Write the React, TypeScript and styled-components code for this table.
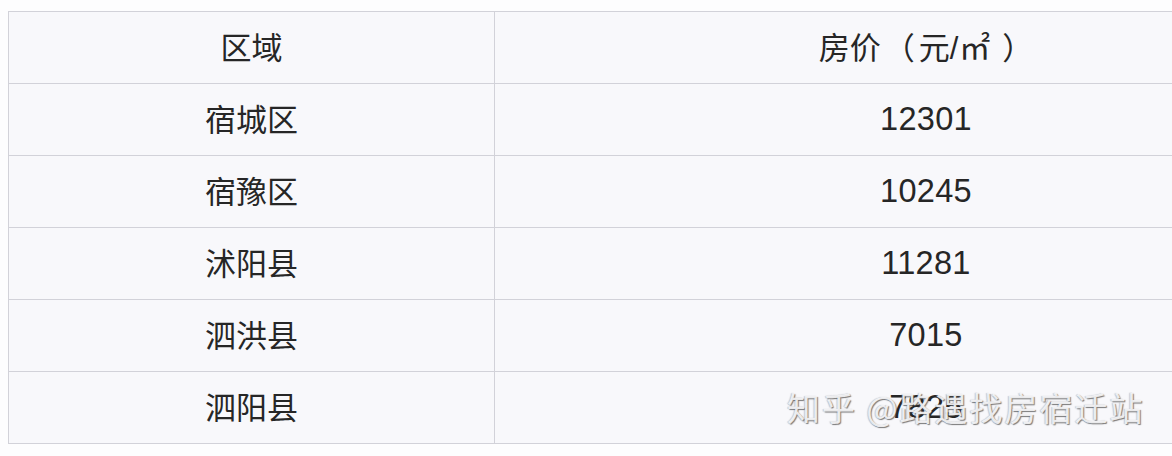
import styled, { createGlobalStyle } from "styled-components";

const GlobalStyle = createGlobalStyle`
  html, body {
    margin: 0;
    padding: 0;
    background: #fdfdfe;
    overflow: hidden;
  }
`;

const Page = styled.div`
  position: relative;
  width: 1172px;
  height: 456px;
  padding: 11px 0 0 8px;
  box-sizing: border-box;
  overflow: hidden;
`;

const Table = styled.div`
  display: grid;
  grid-template-columns: 486px 862px;
  width: 1348px;
  background: #f8f8fb;
  border-top: 1px solid #d2d2d9;
  border-left: 1px solid #d2d2d9;
  box-sizing: border-box;
`;

const Cell = styled.div<{ $first?: boolean }>`
  height: 72px;
  box-sizing: border-box;
  border-bottom: 1px solid #d2d2d9;
  border-right: ${(p) => (p.$first ? "1px solid #d2d2d9" : "none")};
  display: flex;
  align-items: center;
  justify-content: center;
  font-family: "Liberation Sans", "Noto Sans CJK SC", sans-serif;
  font-size: 31px;
  color: #262626;
  padding-bottom: 5px;
  white-space: pre;
`;

const Num = styled.span`
  font-size: 32.5px;
  letter-spacing: 0.3px;
  padding-top: 5px;
`;

const Paren = styled.span<{ $before: number; $after: number }>`
  margin-left: ${(p) => p.$before}px;
  margin-right: ${(p) => p.$after}px;
`;

const Unit = styled.span`
  font-size: 31px;
  margin-left: 1px;
`;

const Watermark = styled.div`
  position: absolute;
  left: 787px;
  top: 383px;
  font-family: "Noto Sans CJK SC", sans-serif;
  font-size: 33px;
  letter-spacing: 2px;
  color: rgba(246, 246, 248, 0.92);
  text-shadow: 1px 1px 1px rgba(70, 70, 70, 0.7), -1px 0 1px rgba(130, 130, 130, 0.4);
  white-space: nowrap;
`;

const rows: [string, string][] = [
  ["宿城区", "12301"],
  ["宿豫区", "10245"],
  ["沭阳县", "11281"],
  ["泗洪县", "7015"],
  ["泗阳县", "7825"],
];

export default function App() {
  return (
    <Page>
      <GlobalStyle />
      <Table>
        <Cell $first>区域</Cell>
        <Cell>
          房价
          <Paren $before={3} $after={4}>（</Paren>
          元/<Unit>㎡</Unit>
          <Paren $before={12} $after={0}>）</Paren>
        </Cell>
        {rows.map(([area, price]) => [
          <Cell $first key={area}>
            {area}
          </Cell>,
          <Cell key={area + price}>
            <Num>{price}</Num>
          </Cell>,
        ])}
      </Table>
      <Watermark>知乎 @路遇找房宿迁站</Watermark>
    </Page>
  );
}
